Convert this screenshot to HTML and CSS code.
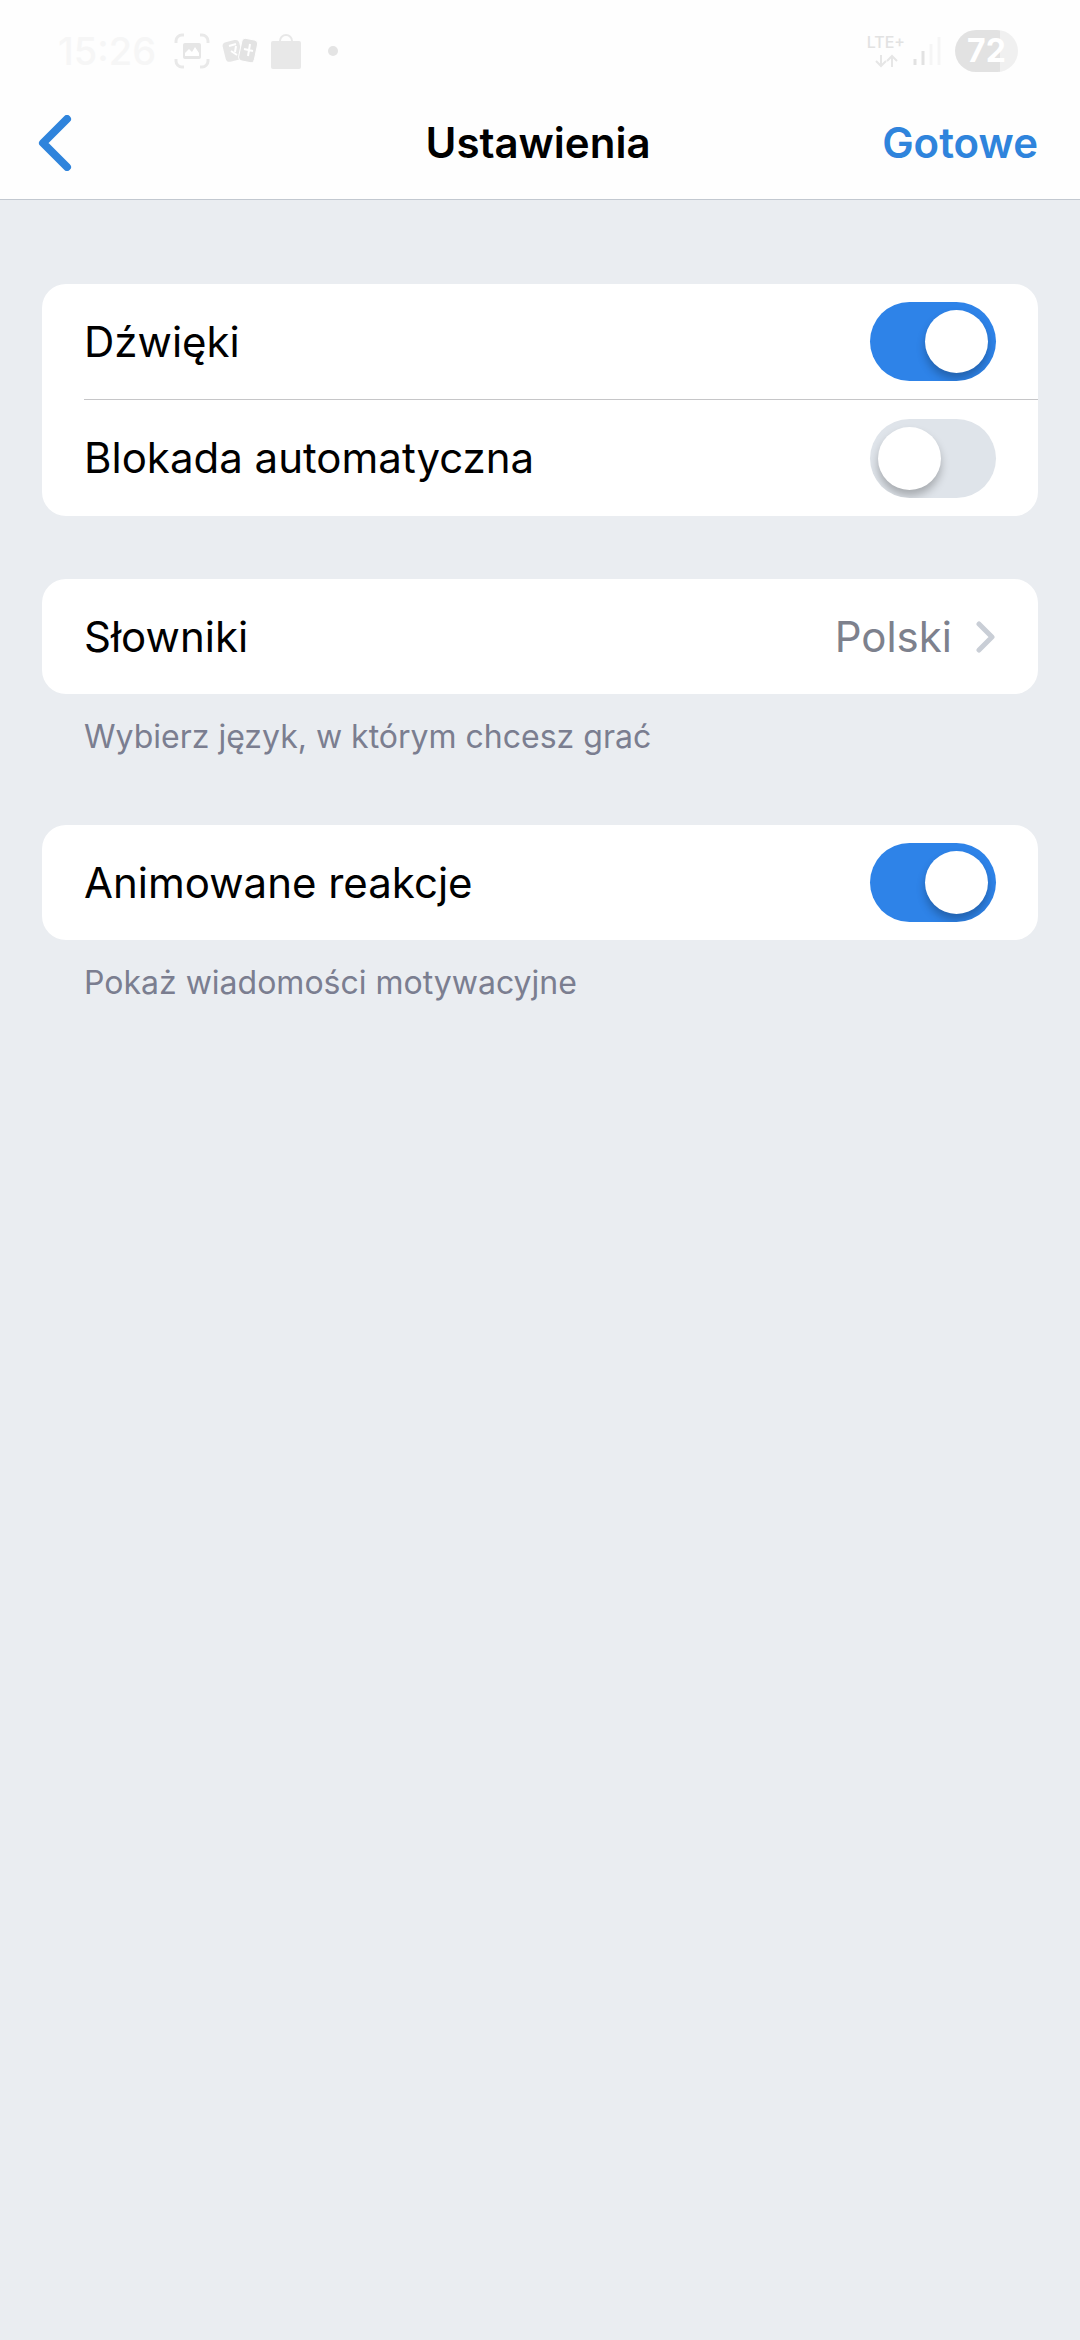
FILE: index.html
```html
<!DOCTYPE html>
<html lang="pl">
<head>
  <meta charset="UTF-8">
  <meta name="viewport" content="width=device-width, initial-scale=1.0">
  <title>Ustawienia</title>
  <link rel="stylesheet" href="styles.css">
</head>
<body>
  <header class="header">
    <!-- Status bar -->
    <div class="status">
      <div class="status-left">
        <span class="clock">15:26</span>
        <svg class="icon-shot" width="36" height="36" viewBox="0 0 36 36">
          <path d="M2 10V8a6 6 0 0 1 6-6h2M26 2h2a6 6 0 0 1 6 6v2M34 26v2a6 6 0 0 1-6 6h-2M10 34H8a6 6 0 0 1-6-6v-2" fill="none" stroke="#e9e9e9" stroke-width="3"/>
          <rect x="9" y="10" width="18" height="16" rx="2" fill="#e6e6e6"/>
          <path d="M11 23v-3l4-4 3 3 3-5 4 6v3z" fill="#fff"/>
        </svg>
        <svg class="icon-cards" width="36" height="26" viewBox="0 0 36 26">
          <rect x="2" y="3" width="17" height="20" rx="4" fill="#e6e6e6" transform="rotate(-14 10 13)"/>
          <rect x="18" y="1" width="16" height="23" rx="4" fill="#e3e3e3" stroke="#fefefe" transform="rotate(12 26 13)"/>
          <path d="M7 8l7-2M9 13l6 4M14 8l-1 6M28 6l-2 12M22 11l9 2" fill="none" stroke="#fff" stroke-width="2"/>
        </svg>
        <svg class="icon-bag" width="32" height="36" viewBox="0 0 32 36">
          <path d="M10 8a6 6 0 0 1 12 0" fill="none" stroke="#e8e8e8" stroke-width="2"/>
          <rect x="1" y="8" width="30" height="28" rx="2" fill="#e8e8e8"/>
        </svg>
        <span class="dot"></span>
      </div>
      <div class="status-right">
        <div class="network">
          <span>LTE+</span>
          <svg width="24" height="14" viewBox="0 0 24 14">
            <path d="M7 1v11M2 7l5 5 5-5M18 13V2M13 7l5-5 5 5" fill="none" stroke="#e6e6e6" stroke-width="2"/>
          </svg>
        </div>
        <svg class="signal" width="28" height="30" viewBox="0 0 28 30">
          <path d="M2 23v6M10 15v14" stroke="#e2e2e2" stroke-width="3"/>
          <path d="M18 8v21M26 1v28" stroke="#f5f5f5" stroke-width="3"/>
        </svg>
        <div class="battery">72</div>
      </div>
    </div>
    <!-- Navigation -->
    <nav class="nav">
      <button class="back" type="button" aria-label="Wstecz">
        <svg width="34" height="56" viewBox="0 0 34 56">
          <path d="M29 4L5 28l24 24" fill="none" stroke="#2f84dc" stroke-width="8" stroke-linecap="round" stroke-linejoin="round"/>
        </svg>
      </button>
      <h1>Ustawienia</h1>
      <button class="done" type="button">Gotowe</button>
    </nav>
  </header>

  <main class="settings">
    <section class="group">
      <div class="card">
        <div class="row">
          <label for="sounds">Dźwięki</label>
          <input class="switch" type="checkbox" id="sounds" checked>
        </div>
        <div class="row">
          <label for="autolock">Blokada automatyczna</label>
          <input class="switch" type="checkbox" id="autolock">
        </div>
      </div>
    </section>

    <section class="group">
      <div class="card">
        <a class="row" href="#">
          <span>Słowniki</span>
          <span class="value">Polski
            <svg width="20" height="32" viewBox="0 0 20 32">
              <path d="M3 3l13 13L3 29" fill="none" stroke="#c9ced6" stroke-width="5" stroke-linecap="round" stroke-linejoin="round"/>
            </svg>
          </span>
        </a>
      </div>
      <p class="hint">Wybierz język, w którym chcesz grać</p>
    </section>

    <section class="group">
      <div class="card">
        <div class="row">
          <label for="reactions">Animowane reakcje</label>
          <input class="switch" type="checkbox" id="reactions" checked>
        </div>
      </div>
      <p class="hint">Pokaż wiadomości motywacyjne</p>
    </section>
  </main>
</body>
</html>
```
FILE: styles.css
```css
* {
  box-sizing: border-box;
}

body {
  margin: 0;
  min-height: 100vh;
  background: #eaedf1;
  color: #000;
  font-family: Inter, "Noto Sans", sans-serif;
  font-size: 42px;
  line-height: 52px;
}

button {
  padding: 0;
  border: 0;
  background: none;
  font: inherit;
  cursor: pointer;
}

svg {
  display: block;
}

/* Header */
.header {
  background: #fefefe;
  border-bottom: 1px solid #c2c8d0;
}

.status {
  display: flex;
  justify-content: space-between;
  height: 88px;
  padding: 14px 62px 0 58px;
}

.status-left,
.status-right {
  display: flex;
  align-items: center;
}

.clock {
  width: 100px;
  font-size: 38px;
  font-weight: 500;
  color: #f6f6f6;
}

.icon-shot {
  margin-left: 16px;
}

.icon-cards {
  margin-left: 12px;
}

.icon-bag {
  margin-left: 12px;
}

.dot {
  width: 10px;
  height: 10px;
  margin-left: 26px;
  border-radius: 50%;
  background: #e4e4e4;
}

.network {
  display: flex;
  flex-direction: column;
  align-items: center;
  gap: 4px;
  font-size: 16px;
  font-weight: 500;
  line-height: 16px;
  color: #e2e2e2;
}

.signal {
  margin: 0 14px 0 8px;
}

.battery {
  width: 63px;
  height: 42px;
  border-radius: 21px;
  background: linear-gradient(90deg, #e2e2e2 72%, #f0f0f0 72%);
  color: #fff;
  font-size: 32px;
  font-weight: 700;
  line-height: 42px;
  text-align: center;
}

.nav {
  display: grid;
  grid-template-columns: 1fr auto 1fr;
  align-items: center;
  height: 111px;
  padding: 0 42px 2px 38px;
}

.nav h1 {
  margin: 0;
  font-size: 42px;
  font-weight: 600;
}

.back {
  justify-self: start;
}

.done {
  justify-self: end;
  color: #2f84dc;
  font-weight: 600;
}

/* Settings list */
.settings {
  padding: 84px 42px;
}

.group {
  margin-bottom: 63px;
}

.card {
  border-radius: 24px;
  background: #fff;
}

.row {
  display: flex;
  align-items: center;
  justify-content: space-between;
  height: 115px;
  margin-left: 42px;
  padding-right: 42px;
  color: inherit;
  text-decoration: none;
}

.row + .row {
  height: 117px;
  border-top: 1px solid #c6c6c8;
}

.value {
  display: flex;
  align-items: center;
  gap: 24px;
  color: #7d818d;
}

.hint {
  margin: 18px 42px 0;
  color: #7b7e90;
  font-size: 32px;
  line-height: 50px;
}

.switch {
  appearance: none;
  width: 126px;
  height: 79px;
  margin: 0;
  padding: 8px;
  border-radius: 40px;
  background: #dfe4ea;
  overflow: hidden;
  cursor: pointer;
}

.switch::before {
  content: "";
  display: block;
  width: 63px;
  height: 63px;
  border-radius: 50%;
  background: #fff;
  box-shadow: 0 6px 8px rgba(0, 0, 0, 0.25);
}

.switch:checked {
  background: #2e83e8;
}

.switch:checked::before {
  margin-left: auto;
}
```
